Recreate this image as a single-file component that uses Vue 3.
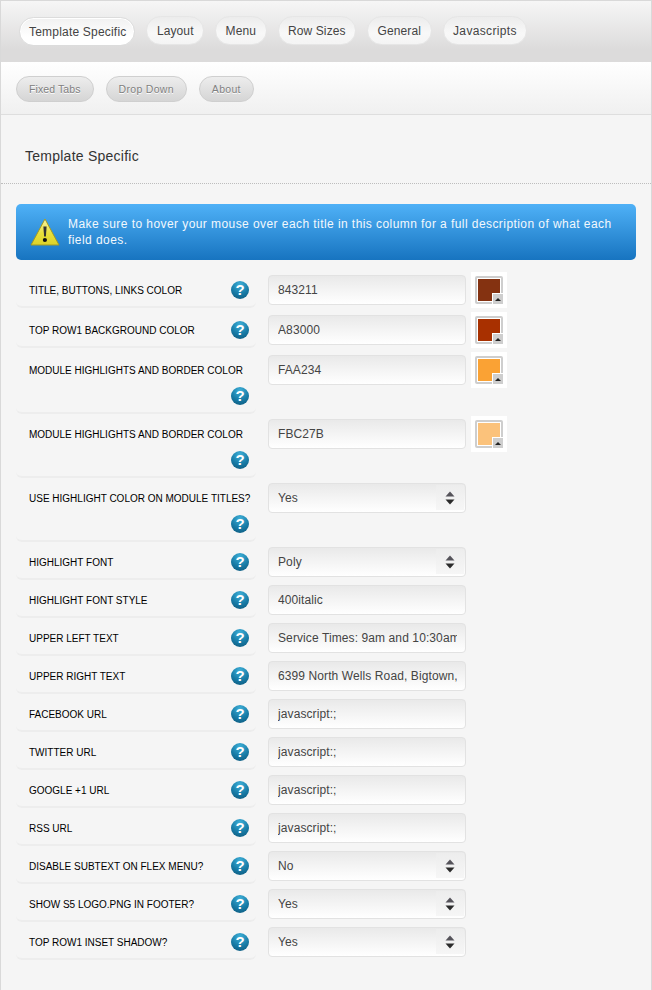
<script setup>
const tabs = ['Layout', 'Menu', 'Row Sizes', 'General', 'Javascripts']
const subTabs = ['Fixed Tabs', 'Drop Down', 'About']
const rows = [
  { label: 'TITLE, BUTTONS, LINKS COLOR', value: '843211', color: '#843211', lifted: true },
  { label: 'TOP ROW1 BACKGROUND COLOR', value: 'A83000', color: '#A83000', lifted: true },
  { label: 'MODULE HIGHLIGHTS AND BORDER COLOR', value: 'FAA234', color: '#FAA234', lifted: true },
  { label: 'MODULE HIGHLIGHTS AND BORDER COLOR', value: 'FBC27B', color: '#FBC27B' },
  { label: 'USE HIGHLIGHT COLOR ON MODULE TITLES?', value: 'Yes', select: true },
  { label: 'HIGHLIGHT FONT', value: 'Poly', select: true },
  { label: 'HIGHLIGHT FONT STYLE', value: '400italic' },
  { label: 'UPPER LEFT TEXT', value: 'Service Times: 9am and 10:30am' },
  { label: 'UPPER RIGHT TEXT', value: '6399 North Wells Road, Bigtown, USA' },
  { label: 'FACEBOOK URL', value: 'javascript:;' },
  { label: 'TWITTER URL', value: 'javascript:;' },
  { label: 'GOOGLE +1 URL', value: 'javascript:;' },
  { label: 'RSS URL', value: 'javascript:;' },
  { label: 'DISABLE SUBTEXT ON FLEX MENU?', value: 'No', select: true },
  { label: 'SHOW S5 LOGO.PNG IN FOOTER?', value: 'Yes', select: true },
  { label: 'TOP ROW1 INSET SHADOW?', value: 'Yes', select: true },
]
</script>

<template>
  <div class="page">
    <nav class="tabs">
      <span class="tab active">Template Specific</span>
      <span v-for="t in tabs" :key="t" class="tab">{{ t }}</span>
    </nav>
    <nav class="subtabs">
      <span v-for="t in subTabs" :key="t" class="subtab">{{ t }}</span>
    </nav>
    <h2 class="title">Template Specific</h2>
    <div class="content">
      <div class="notice">
        <svg class="warn" width="30" height="28" viewBox="0 0 30 28">
          <defs>
            <linearGradient id="warnFill" x1="0" y1="0" x2="0" y2="1">
              <stop offset="0" stop-color="#f6f4a8" />
              <stop offset="0.55" stop-color="#e9e03a" />
              <stop offset="1" stop-color="#dcd22a" />
            </linearGradient>
          </defs>
          <path d="M15 1 L29 27 L1 27 Z" fill="url(#warnFill)" stroke="#a39a22" stroke-width="1" stroke-linejoin="round" />
          <path d="M13.4 8.5 h3.2 l-0.7 10 h-1.8 Z" fill="#333" />
          <circle cx="14.9" cy="22" r="2.1" fill="#111" />
        </svg>
        <p class="notice-text">Make sure to hover your mouse over each title in this column for a full description of what each field does.</p>
      </div>
      <div v-for="(r, i) in rows" :key="i" class="row" :class="{ lifted: r.lifted }">
        <div class="label-cell">
          <span class="label">{{ r.label }}</span>
          <span class="help">?</span>
        </div>
        <div class="control">
          <div class="field">
            <span class="field-text">{{ r.value }}</span>
            <span v-if="r.select" class="spin">
              <svg width="10" height="14" viewBox="0 0 10 14">
                <path d="M5 0.5 L9.5 5.5 H0.5 Z" fill="#55535a" />
                <path d="M0.5 8.5 H9.5 L5 13.5 Z" fill="#2b2b2b" />
              </svg>
            </span>
          </div>
          <div v-if="r.color" class="swatch">
            <div class="well">
              <div class="chip" :style="{ background: r.color }"></div>
              <div class="corner"></div>
            </div>
          </div>
        </div>
      </div>
    </div>
  </div>
</template>

<style>
html, body { margin: 0; background: #f5f5f5; }
</style>

<style scoped>
.page {
  box-sizing: border-box;
  min-height: 990px;
  width: 652px;
  background: #f5f5f5;
  border: 1px solid #d9d9d9;
  border-bottom: 0;
  font-family: "Liberation Sans", Arial, sans-serif;
  color: #444;
}
.tabs {
  box-sizing: border-box;
  height: 61px;
  display: flex;
  align-items: flex-start;
  gap: 11px;
  padding: 15px 0 0 18px;
  background: linear-gradient(#f6f6f6, #dcdbdb 80%);
}
.tab {
  box-sizing: border-box;
  height: 29px;
  line-height: 28px;
  padding: 0 9.5px;
  font-size: 12px;
  letter-spacing: 0.1px;
  color: #444;
  background: linear-gradient(#ececec, #f8f8f8 60%, #f4f4f4);
  border: 1px solid #e6e6e6;
  border-radius: 15px;
}
.tab:last-child { letter-spacing: 0.35px; }
.tab.active {
  margin-top: 1px;
  padding: 0 8px 0 9px;
  letter-spacing: 0.2px;
  background: linear-gradient(#f1f1f1, #ffffff 70%);
  border: 1px solid #dcdcdc;
  box-shadow: inset 0 0 0 1px #fff;
}
.subtabs {
  box-sizing: border-box;
  height: 53px;
  display: flex;
  align-items: flex-start;
  gap: 12px;
  padding: 14px 0 0 15px;
  background: linear-gradient(#ffffff, #f0f0f0);
  border-bottom: 1px solid #dedede;
}
.subtab {
  box-sizing: border-box;
  height: 26px;
  line-height: 24px;
  padding: 0 12px;
  font-size: 10.5px;
  letter-spacing: 0.3px;
  color: #808080;
  text-shadow: 0 1px 0 #fff;
  background: linear-gradient(#ededed, #d5d5d5);
  border: 1px solid #cfcfcf;
  border-radius: 13px;
}
.subtab:first-child { letter-spacing: 0.1px; }
.title {
  box-sizing: border-box;
  height: 69px;
  margin: 0;
  padding: 32px 0 0 24px;
  font-size: 14px;
  line-height: 18px;
  font-weight: normal;
  letter-spacing: 0.25px;
  color: #333;
  border-bottom: 1px dotted #bdbdbd;
}
.content {
  padding: 20px 15px 0;
}
.notice {
  box-sizing: border-box;
  height: 56px;
  display: flex;
  align-items: center;
  gap: 8px;
  padding: 0 12px 0 14px;
  border-radius: 5px;
  background: linear-gradient(#4fb1f7, #1774c0);
  margin-bottom: 7px;
}
.warn { flex: none; }
.notice-text {
  margin: 0;
  font-size: 12px;
  line-height: 16px;
  letter-spacing: 0.43px;
  color: #f2f8fd;
}
.row {
  display: flex;
  align-items: flex-start;
}
.row.lifted { padding-top: 2px; }
.label-cell {
  box-sizing: border-box;
  width: 240px;
  flex: none;
  display: flex;
  flex-wrap: wrap;
  align-items: center;
  padding: 8px 5px 3px 13px;
  margin-bottom: -1px;
  border-bottom: 2px solid #ededed;
  border-radius: 0 0 6px 6px;
}
.label {
  height: 26px;
  line-height: 28px;
  font-size: 10px;
  white-space: nowrap;
  color: #000;
}
.help {
  margin: 4px 2px 4px auto;
  width: 18px;
  height: 18px;
  border-radius: 50%;
  background: radial-gradient(circle at 50% 20%, #3fb0d8, #177ba6 55%, #0d5578);
  color: #fff;
  font-size: 15px;
  font-weight: bold;
  line-height: 18px;
  text-align: center;
}
.control {
  display: flex;
  align-items: flex-start;
  margin-left: 12px;
  padding-top: 6px;
}
.field {
  box-sizing: border-box;
  position: relative;
  width: 198px;
  height: 30px;
  padding: 0 8px 0 9px;
  border: 1px solid #e2e2e2;
  border-radius: 4px;
  background: linear-gradient(#e9e9e9, #f2f2f2 40%, #ffffff);
  font-size: 12px;
  line-height: 29px;
  letter-spacing: 0.1px;
  color: #444;
}
.field-text {
  display: block;
  overflow: hidden;
  white-space: nowrap;
}
.spin {
  position: absolute;
  top: 1px;
  right: 1px;
  bottom: 2px;
  width: 28px;
  display: flex;
  align-items: center;
  justify-content: center;
  background: linear-gradient(#ededed, #f6f6f6);
}
.swatch {
  box-sizing: border-box;
  width: 36px;
  height: 36px;
  margin: -3px -4px -4px 5px;
  padding: 4px;
  background: #fff;
}
.well {
  position: relative;
  box-sizing: border-box;
  width: 28px;
  height: 28px;
  padding: 2px;
  background: #cecece;
  border-radius: 2px;
}
.chip {
  box-sizing: border-box;
  width: 24px;
  height: 24px;
  border: 1px solid #fff;
}
.corner {
  position: absolute;
  right: 0;
  bottom: 0;
  width: 11px;
  height: 11px;
  background: #cecece;
  border-top: 1px solid #fff;
  border-left: 1px solid #fff;
  box-sizing: border-box;
}
.corner::after {
  content: "";
  position: absolute;
  left: 2px;
  top: 4px;
  border-left: 3px solid transparent;
  border-right: 3px solid transparent;
  border-bottom: 3px solid #222;
}
</style>
